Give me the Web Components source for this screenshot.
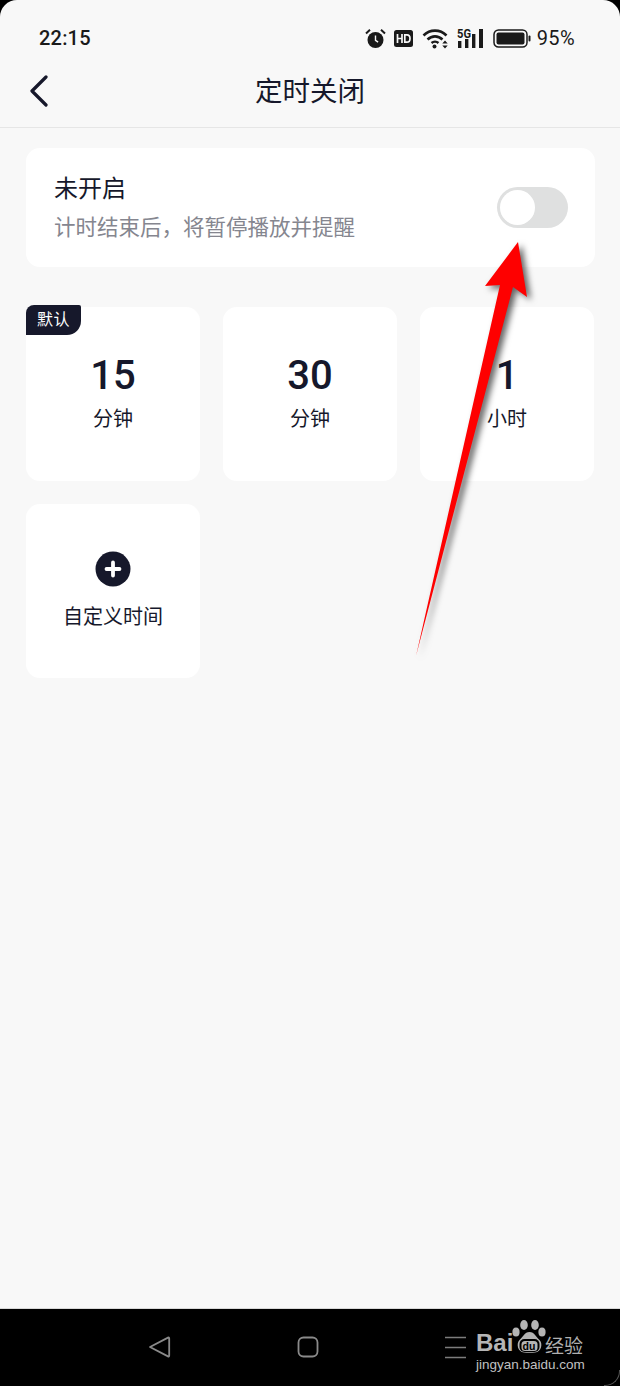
<!doctype html>
<html lang="zh">
<head>
<meta charset="utf-8">
<title>定时关闭</title>
<style>
  html, body { margin: 0; padding: 0; background: #000; }
  body { font-family: Roboto, "Noto Sans CJK SC", sans-serif; color: #16182b; }
</style>
</head>
<body>
<phone-page>
  <status-bar time="22:15" battery="95%"></status-bar>
  <app-header>定时关闭</app-header>
  <timer-switch title-text="未开启">计时结束后，将暂停播放并提醒</timer-switch>
  <tile-grid>
    <time-tile value="15" unit="分钟" badge="默认"></time-tile>
    <time-tile value="30" unit="分钟"></time-tile>
    <time-tile value="1" unit="小时"></time-tile>
    <custom-tile>自定义时间</custom-tile>
  </tile-grid>
  <red-arrow slot="over"></red-arrow>
  <nav-bar slot="bottom"></nav-bar>
</phone-page>

<script>
  // small helper, every element just sets its shadow html once
  class Base extends HTMLElement {
    constructor () {
      super()
      this.attachShadow({ mode: 'open' })
    }

    connectedCallback () {
      this.shadowRoot.innerHTML = this.render()
    }
  }

  const CJK = 'Roboto, "Noto Sans CJK SC", sans-serif'

  class PhonePage extends Base {
    render () {
      return `<style>
        :host { display: block; position: relative; width: 620px; height: 1386px; overflow: hidden; background: #000; }
        .screen { height: 1309px; box-sizing: border-box; background: #f8f8f8; border-radius: 17px 17px 0 0;
          border-bottom: 1px solid #d8d8d8; }
      </style>
      <div class="screen"><slot></slot></div>
      <slot name="bottom"></slot>
      <slot name="over"></slot>`
    }
  }

  class StatusBar extends Base {
    render () {
      return `<style>
        :host { display: flex; align-items: center; height: 76px; box-sizing: border-box; padding: 0 45px 0 39px; color: #1a1a1a; }
        .time { font: 500 20px/1 Roboto, sans-serif; letter-spacing: .2px; flex: 1; }
        .icons { display: flex; align-items: center; }
        svg { display: block; }
        .pct { font: 400 20px/1 Roboto, sans-serif; margin-left: 6px; letter-spacing: .4px; }
      </style>
      <div class="time">${this.getAttribute('time')}</div>
      <div class="icons">
        <svg width="21" height="21" viewBox="0 0 21 21" style="margin-right:8px">
          <circle cx="10.5" cy="12" r="8" fill="#1a1a1a"/>
          <path d="M10.5 7.5V12.3l2.6 1.8" fill="none" stroke="#f8f8f8" stroke-width="1.4"/>
          <path d="M1 5.5 5 1.8M20 5.5 16 1.8" stroke="#1a1a1a" stroke-width="2" fill="none"/>
        </svg>
        <svg width="19" height="17" viewBox="0 0 19 17" style="margin-right:9px">
          <rect x="0" y="0" width="19" height="17" rx="2.5" fill="#1a1a1a"/>
          <path d="M3.5 4v9M8 4v9M3.5 8.5H8" stroke="#f8f8f8" stroke-width="1.7" fill="none"/>
          <path d="M10.8 4.8v7.4h2.2c2 0 3-1.3 3-3.7s-1-3.7-3-3.7z" stroke="#f8f8f8" stroke-width="1.7" fill="none"/>
        </svg>
        <svg width="27" height="21" viewBox="0 0 27 21" style="margin-right:8px">
          <path d="M1.5 7.5C8 1 18 1 24.5 7.5" fill="none" stroke="#1a1a1a" stroke-width="2.6"/>
          <path d="M5.5 11.5C10 7.3 16 7.3 20.5 11.5" fill="none" stroke="#1a1a1a" stroke-width="2.6"/>
          <path d="M9.5 15C11.5 13.3 14.5 13.3 16.5 15" fill="none" stroke="#1a1a1a" stroke-width="2.4"/>
          <circle cx="12.5" cy="18.5" r="2" fill="#1a1a1a"/>
          <path d="M23 12.5l-2.7 3h5.4zM23 20.5l-2.7-3h5.4z" fill="#1a1a1a"/>
        </svg>
        <svg width="27" height="20" viewBox="0 0 27 20" style="margin-right:9px">
          <text x="0" y="10" font-family="Roboto, sans-serif" font-weight="700" font-size="12" textLength="14" lengthAdjust="spacingAndGlyphs" fill="#1a1a1a">5G</text>
          <rect x="1" y="13" width="3.4" height="7" fill="#1a1a1a"/>
          <rect x="8" y="11" width="3.4" height="9" fill="#1a1a1a"/>
          <rect x="15" y="6" width="3.4" height="14" fill="#1a1a1a"/>
          <rect x="22" y="1" width="4" height="19" fill="#1a1a1a"/>
        </svg>
        <svg width="38" height="19" viewBox="0 0 38 19">
          <rect x="1" y="1" width="33" height="17" rx="4.5" fill="none" stroke="#1a1a1a" stroke-width="1.5"/>
          <rect x="3.5" y="3.5" width="28" height="12" rx="2" fill="#1a1a1a"/>
          <rect x="35.5" y="6.5" width="2" height="6" rx="1" fill="#1a1a1a"/>
        </svg>
        <div class="pct">${this.getAttribute('battery')}</div>
      </div>`
    }
  }

  class AppHeader extends Base {
    render () {
      return `<style>
        :host { display: flex; align-items: center; justify-content: center; position: relative; height: 51px;
          border-bottom: 1px solid #e6e6e6; font: 400 27.5px/1 ${CJK}; color: #16182b; }
        .title { margin-top: -20px; }
        svg { position: absolute; left: 29px; top: -1px; }
      </style>
      <svg width="20" height="32" viewBox="0 0 20 32">
        <path d="M17 2 3 16l14 14" fill="none" stroke="#16182b" stroke-width="3.2" stroke-linecap="round" stroke-linejoin="round"/>
      </svg>
      <div class="title"><slot></slot></div>`
    }
  }

  class TimerSwitch extends Base {
    render () {
      return `<style>
        :host { display: flex; align-items: center; justify-content: space-between; margin: 20px 25px 0 26px; height: 119px;
          box-sizing: border-box; padding: 0 27px 0 28px; background: #fff; border-radius: 14px; font-family: ${CJK}; }
        .t { font-size: 24px; line-height: 32px; color: #16182b; }
        .d { font-size: 21.5px; line-height: 30px; color: #85868f; margin-top: 8px; }
        .sw { width: 71px; height: 41px; box-sizing: border-box; border-radius: 21px; background: #dfe0e0; padding: 3px; }
        .k { width: 35px; height: 35px; border-radius: 50%; background: #fff; }
      </style>
      <div><div class="t">${this.getAttribute('title-text')}</div><div class="d"><slot></slot></div></div>
      <div class="sw"><div class="k"></div></div>`
    }
  }

  class TileGrid extends Base {
    render () {
      return `<style>
        :host { display: grid; grid-template-columns: repeat(3, 174px); grid-auto-rows: 174px; column-gap: 23px; row-gap: 23px;
          margin: 40px 0 0 26px; }
      </style><slot></slot>`
    }
  }

  class TimeTile extends Base {
    render () {
      const badge = this.getAttribute('badge')
      return `<style>
        :host { display: block; position: relative; background: #fff; border-radius: 14px; text-align: center; color: #16182b; }
        .v { font: 500 40px/46px Roboto, sans-serif; padding-top: 46px; }
        .u { font: 400 20px/28px ${CJK}; margin-top: 6px; }
        .b { position: absolute; left: 0; top: -2px; width: 55px; height: 30px; box-sizing: border-box; background: #16182b; color: #fff;
          font: 400 16px/29px ${CJK}; letter-spacing: .5px; border-radius: 8px 2px 14px 0; text-align: center; }
      </style>
      ${badge ? `<div class="b">${badge}</div>` : ''}
      <div class="v">${this.getAttribute('value')}</div>
      <div class="u">${this.getAttribute('unit')}</div>`
    }
  }

  class CustomTile extends Base {
    render () {
      return `<style>
        :host { display: flex; flex-direction: column; align-items: center; background: #fff; border-radius: 14px; color: #16182b;
          font: 400 20px/28px ${CJK}; }
        svg { margin-top: 47px; display: block; }
        .l { margin-top: 16px; }
      </style>
      <svg width="36" height="36" viewBox="0 0 36 36">
        <circle cx="18" cy="18" r="17.5" fill="#16182b"/>
        <path d="M18 11.5v13M11.5 18h13" stroke="#fff" stroke-width="3.8" stroke-linecap="round"/>
      </svg>
      <div class="l"><slot></slot></div>`
    }
  }

  class RedArrow extends Base {
    render () {
      return `<style>
        :host { position: absolute; left: 400px; top: 230px; display: block; width: 150px; height: 440px; pointer-events: none; }
        svg { display: block; overflow: visible; filter: drop-shadow(4px 3px 3px rgba(0,0,0,.6)); }
      </style>
      <svg width="150" height="440" viewBox="400 230 150 440">
        <polygon fill="#fe0000" points="518,242 527,297 513,287 416,656 500,285 485,286"/>
      </svg>`
    }
  }

  class NavBar extends Base {
    render () {
      return `<style>
        :host { display: flex; height: 77px; position: relative; background: #000; color: #bdbdbd; }
        svg { position: absolute; display: block; }
        .mark { position: absolute; left: 476px; top: 12px; width: 115px; height: 56px; }
        .bai { position: absolute; left: 0; top: 11px; font: 700 24px/22px "Liberation Sans", sans-serif; color: #b5b5b5; }
        .jy { position: absolute; left: 69px; top: 12px; font: 400 19px/24px "Noto Sans CJK SC", sans-serif; color: #b0b0b0; white-space: nowrap; }
        .url { position: absolute; left: 0; top: 35px; font: 400 13.5px/18px "Liberation Sans", sans-serif; color: #c0c0c0; white-space: nowrap; }
        .corner { position: absolute; right: 0; bottom: 0; width: 16px; height: 16px; box-sizing: border-box;
          border-right: 1px solid #555; border-bottom: 1px solid #555; border-radius: 0 0 15px 0; }
      </style>
      <svg style="left:148px;top:27px" width="24" height="22" viewBox="0 0 24 22">
        <path d="M2 11 20 1.6c.6-.3 1.2 0 1.2.8v17.2c0 .8-.6 1.1-1.2.8z" fill="none" stroke="#8a8a8a" stroke-width="1.8" stroke-linejoin="round"/>
      </svg>
      <svg style="left:297px;top:27px" width="22" height="22" viewBox="0 0 22 22">
        <rect x="1.5" y="1.5" width="19" height="19" rx="5" fill="none" stroke="#8a8a8a" stroke-width="1.8"/>
      </svg>
      <svg style="left:445px;top:27px" width="21" height="24" viewBox="0 0 21 24">
        <path d="M0 1.5h21M0 11.5h21M0 21.5h21" stroke="#7c7c7c" stroke-width="1.6"/>
      </svg>
      <div class="mark">
        <div class="bai">Bai</div>
        <svg style="left:36px;top:-2px" width="35" height="37" viewBox="0 0 35 37">
          <g fill="#b4b4b4">
            <ellipse cx="4" cy="13" rx="3.6" ry="4.5"/>
            <ellipse cx="12" cy="6" rx="3.8" ry="5"/>
            <ellipse cx="23" cy="6" rx="3.8" ry="5"/>
            <ellipse cx="30" cy="13" rx="3.6" ry="4.5"/>
            <path d="M17.500 13c5 0 6.500 5 10 8 3.500 3.500 2 12-4.500 12.500-3.500.3-7.500.3-11 0C5.500 33 4 24.500 7.500 21c3.500-3 5-8 10-8z"/>
          </g>
          <rect x="7.5" y="20" width="20" height="13" rx="5" fill="#000"/>
          <rect x="9.5" y="22" width="16" height="10" rx="3.5" fill="#b4b4b4"/>
          <text x="10.5" y="31" font-family="Liberation Sans, sans-serif" font-size="10.5" font-weight="700" fill="#000">du</text>
        </svg>
        <div class="jy">经验</div>
        <div class="url">jingyan.baidu.com</div>
      </div>
      <div class="corner"></div>`
    }
  }

  customElements.define('phone-page', PhonePage)
  customElements.define('status-bar', StatusBar)
  customElements.define('app-header', AppHeader)
  customElements.define('timer-switch', TimerSwitch)
  customElements.define('tile-grid', TileGrid)
  customElements.define('time-tile', TimeTile)
  customElements.define('custom-tile', CustomTile)
  customElements.define('red-arrow', RedArrow)
  customElements.define('nav-bar', NavBar)
</script>
</body>
</html>
